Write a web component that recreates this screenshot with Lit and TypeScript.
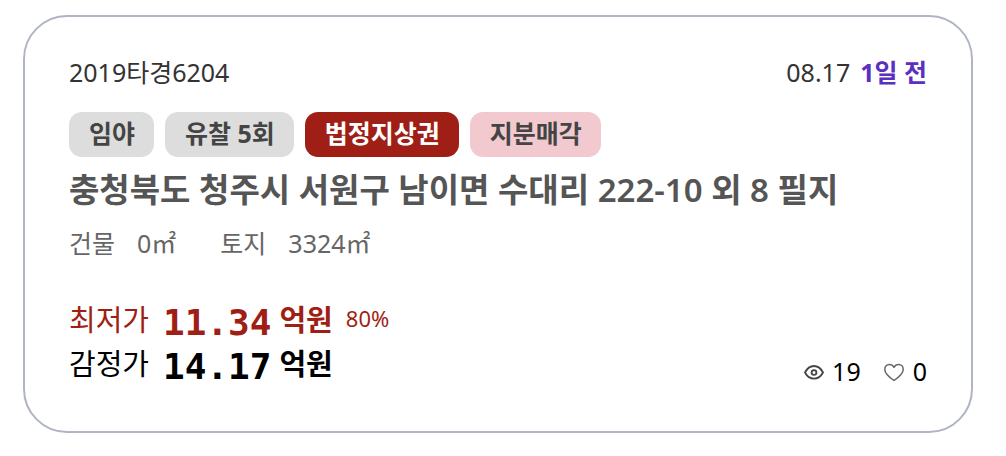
import { LitElement, html, css } from "lit";
import { customElement, property } from "lit/decorators.js";

type Tone = "plain" | "danger" | "soft";

@customElement("auction-tag")
class AuctionTag extends LitElement {
  @property() tone: Tone = "plain";

  static styles = css`
    :host { display: block; }
    .tag {
      display: block;
      padding: 3px 19px 6px 20px;
      border-radius: 13px;
      font-size: 25px;
      line-height: 36px;
      font-weight: 700;
      white-space: nowrap;
    }
    .plain { background: #dddddd; color: #444444; }
    .danger { background: #9f1f16; color: #ffffff; }
    .soft { background: #f1c9cf; color: #444444; }
  `;

  render() {
    return html`<span class="tag ${this.tone}"><slot></slot></span>`;
  }
}

@customElement("auction-price")
class AuctionPrice extends LitElement {
  @property() label = "";
  @property() amount = "";
  @property() rate = "";

  static styles = css`
    :host { display: block; }
    .price {
      display: flex;
      align-items: center;
      height: 44px;
      white-space: nowrap;
    }
    .label { font-size: 29px; margin-right: 14px; }
    .amount {
      font: 700 36px/40px "DejaVu Sans Mono", monospace;
      margin-right: 8px;
      padding-top: 10px;
    }
    .unit { font-size: 29px; font-weight: 700; }
    .rate { font-size: 22px; margin-left: 13px; }
  `;

  render() {
    return html`<div class="price">
      <span class="label">${this.label}</span>
      <span class="amount">${this.amount}</span>
      <span class="unit">억원</span>
      ${this.rate ? html`<span class="rate">${this.rate}</span>` : null}
    </div>`;
  }
}

@customElement("app-root")
class AppRoot extends LitElement {
  private tags: { text: string; tone: Tone }[] = [
    { text: "임야", tone: "plain" },
    { text: "유찰 5회", tone: "plain" },
    { text: "법정지상권", tone: "danger" },
    { text: "지분매각", tone: "soft" },
  ];

  static styles = css`
    :host {
      display: block;
      padding: 15px 33px 23px 23px;
      font-family: "Noto Sans", "Noto Sans CJK KR", sans-serif;
      color: #333333;
      background: #ffffff;
    }
    .card {
      border: 2px solid #b0b5c3;
      border-radius: 44px;
      padding: 37px 44px 47px;
    }
    .head, .foot { display: flex; justify-content: space-between; }
    .head { font-size: 25px; line-height: 36px; }
    .when { display: flex; gap: 10px; }
    .ago { color: #5b2fc0; font-weight: 700; }
    .tags { display: flex; gap: 11px; margin-top: 22px; }
    .address {
      margin: 9px 0 0;
      font-size: 33px;
      line-height: 48px;
      font-weight: 600;
      color: #555555;
      white-space: nowrap;
    }
    .areas {
      display: flex;
      gap: 44px;
      margin: 11px 0 0;
      font-size: 25px;
      line-height: 36px;
      color: #666666;
    }
    .area { display: flex; gap: 22px; }
    .area dd { margin: 0; }
    .foot { align-items: flex-end; margin-top: 35px; color: #000000; }
    .lowest { color: #9f1f16; }
    .counts { display: flex; gap: 22px; font-size: 25px; line-height: 26px; }
    .count {
      display: flex;
      align-items: center;
      gap: 8px;
      padding: 0;
      border: 0;
      background: none;
      font: inherit;
      color: inherit;
    }
    .icon { display: block; width: 22px; height: 22px; fill: none; }
  `;

  render() {
    return html`
      <article class="card">
        <header class="head">
          <span>2019타경6204</span>
          <span class="when"><span>08.17</span><span class="ago">1일 전</span></span>
        </header>
        <div class="tags">
          ${this.tags.map((t) => html`<auction-tag tone=${t.tone}>${t.text}</auction-tag>`)}
        </div>
        <h2 class="address">충청북도 청주시 서원구 남이면 수대리 222-10 외 8 필지</h2>
        <dl class="areas">
          <div class="area"><dt>건물</dt><dd>0㎡</dd></div>
          <div class="area"><dt>토지</dt><dd>3324㎡</dd></div>
        </dl>
        <footer class="foot">
          <div>
            <auction-price class="lowest" label="최저가" amount="11.34" rate="80%"></auction-price>
            <auction-price label="감정가" amount="14.17"></auction-price>
          </div>
          <div class="counts">
            <span class="count">
              <svg class="icon" viewBox="0 0 22 22" stroke="#444444" stroke-width="1.8" aria-label="조회">
                <path d="M3 12.500C5.200 8.100 8.300 6 12 6s6.800 2.100 9 6.500c-2.200 4.100-5.300 6.200-9 6.200s-6.800-2.100-9-6.200z" stroke-linejoin="round" />
                <circle cx="12" cy="12.500" r="2.400" />
              </svg>
              19
            </span>
            <button class="count" type="button" aria-label="관심 0">
              <svg class="icon" viewBox="0 0 22 22" stroke="#666666" stroke-width="1.500">
                <path d="M11 20.500C7 17.700 1.800 14 1.800 9.400c0-3 2-4.900 4.500-4.900 2 0 3.700 1 4.700 2.800 1-1.800 2.700-2.800 4.700-2.800 2.500 0 4.500 1.900 4.500 4.900 0 4.600-5.200 8.300-9.200 11.100z" stroke-linejoin="round" />
              </svg>
              0
            </button>
          </div>
        </footer>
      </article>
    `;
  }
}
